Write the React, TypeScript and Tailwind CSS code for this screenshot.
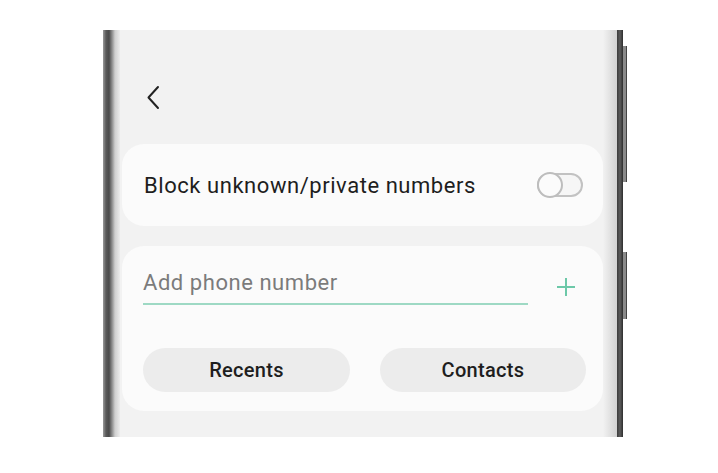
export default function App() {
  return (
    <div className="w-[718px] h-[473px] bg-white pl-[103px] pt-[30px] font-['Roboto',sans-serif] overflow-hidden">
      <div className="relative flex w-[520px] h-[407px]">
        {/* left bezel */}
        <div className="w-[17px] h-full bg-[linear-gradient(to_right,#9a9a9a_0px,#5a5a5a_3px,#4a4a4a_6px,#8c8c8c_9px,#cfcfcf_12px,#ececec_17px)]" />

        {/* screen */}
        <div className="flex-1 h-full bg-[#f2f2f2] flex flex-col pl-[2px] pr-[14px]">
          <div className="mt-[55px] ml-[25px] h-[26px] w-[26px] flex items-center">
            <svg width="14" height="26" viewBox="0 0 14 26" fill="none">
              <path d="M11 2 L1.5 12.5 L11 23" stroke="#222" strokeWidth="2" strokeLinecap="round" strokeLinejoin="round" />
            </svg>
          </div>

          <div className="mt-[33px] h-[82px] rounded-[22px] bg-[#fbfbfb] flex items-center justify-between pl-[22px] pr-[20px]">
            <span className="text-[22px] text-[#1e1e1e] tracking-[0.55px]">Block unknown/private numbers</span>
            <div className="relative w-[46px] h-[24px] rounded-full border-2 border-[#c2c2c2] bg-[#f6f6f6]">
              <div className="absolute left-[-2px] top-[-3px] w-[26px] h-[26px] rounded-full border-2 border-[#bdbdbd] bg-[#fbfbfb]" />
            </div>
          </div>

          <div className="mt-[20px] h-[165px] rounded-[22px] bg-[#fbfbfb] flex flex-col pl-[21px] pr-[17px]">
            <div className="flex items-end pt-[23px]">
              <div className="w-[385px] border-b-2 border-[#9ed9c4] pb-[6px] text-[22px] leading-[28px] tracking-[0.55px] text-[#7b7b7b]">
                Add phone number
              </div>
              <div className="ml-[28px] pb-[8px]">
                <svg width="20" height="20" viewBox="0 0 20 20" fill="none">
                  <path d="M10 1 V19 M1 10 H19" stroke="#6cc8a8" strokeWidth="2" />
                </svg>
              </div>
            </div>
            <div className="mt-[43px] flex gap-[30px]">
              <button className="w-[207px] h-[44px] rounded-full bg-[#ececec] text-[20px] font-medium tracking-[0.3px] text-[#1e1e1e]">
                Recents
              </button>
              <button className="w-[206px] h-[44px] rounded-full bg-[#ececec] text-[20px] font-medium tracking-[0.3px] text-[#1e1e1e]">
                Contacts
              </button>
            </div>
          </div>
        </div>

        {/* right bezel */}
        <div className="w-[6px] h-full bg-[linear-gradient(to_right,#3c3c3c,#5c5c5c,#2e2e2e)]" />
        <div className="absolute right-[6px] top-0 w-[14px] h-full bg-[linear-gradient(to_right,rgba(242,242,242,0),#d2d2d2)]" />

        {/* side buttons */}
        <div className="absolute right-[-4px] top-[16px] w-[4px] h-[136px] bg-[#8a8a8a] border-r border-[#444]" />
        <div className="absolute right-[-4px] top-[222px] w-[4px] h-[67px] bg-[#8a8a8a] border-r border-[#444]" />
      </div>
    </div>
  )
}
